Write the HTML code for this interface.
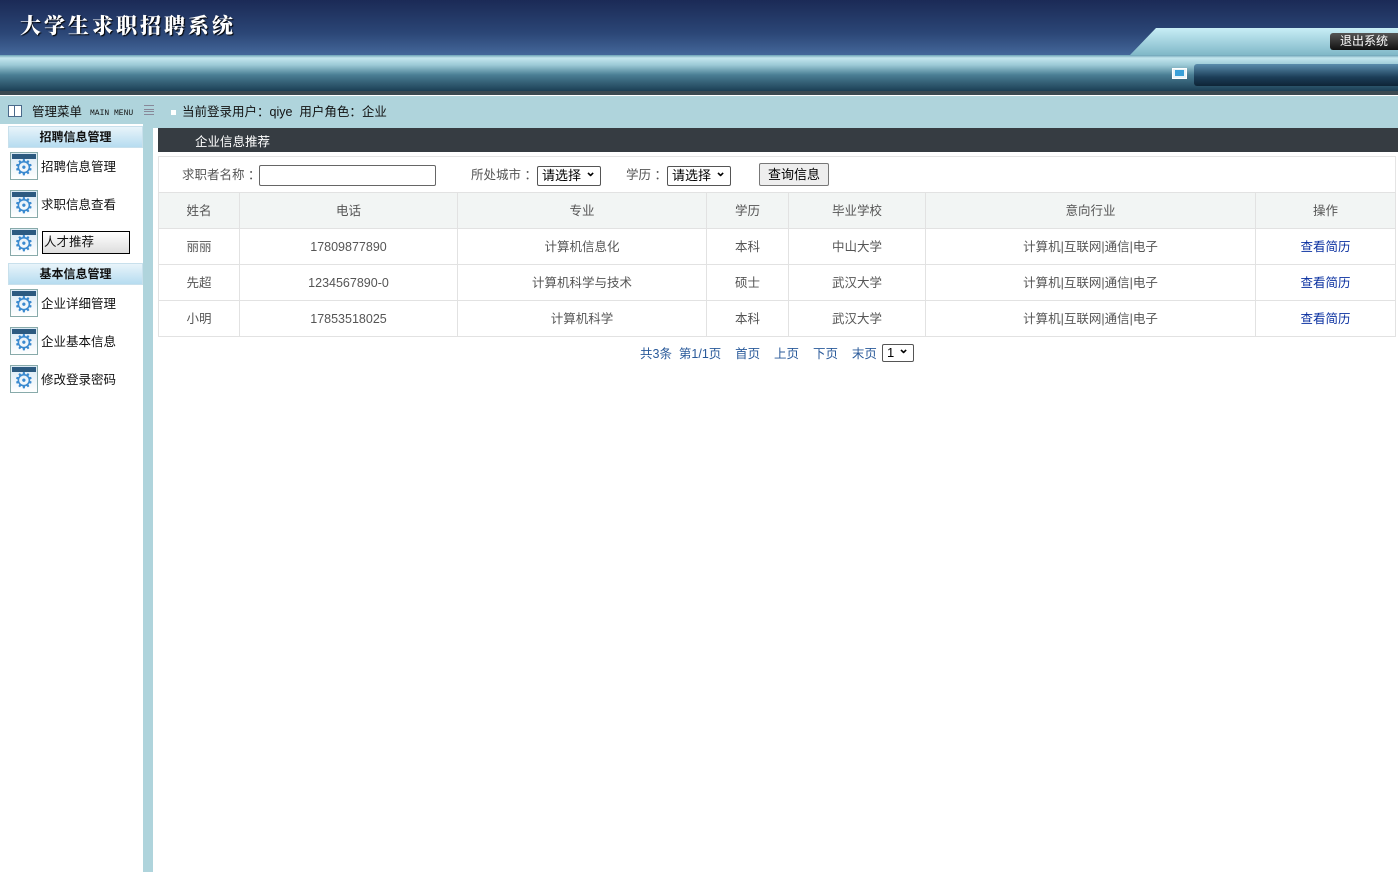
<!DOCTYPE html>
<html><head><meta charset="utf-8"><style>
*{margin:0;padding:0;box-sizing:border-box}
body{width:1398px;height:872px;overflow:hidden;background:#fff;font-family:"Liberation Sans","Noto Sans CJK SC",sans-serif;font-size:12px;color:#333;position:relative}
.abs{position:absolute}
#hdr{left:0;top:0;width:1398px;height:55px;background:linear-gradient(#1b2a56,#2b4676 60%,#44679a)}
#title{left:20px;top:10px;color:#fff;font-family:"Noto Serif CJK SC",serif;font-weight:900;font-size:21px;letter-spacing:3px;text-shadow:1px 1px 1px #000}
#tab{left:1130px;top:28px;width:268px;height:27px;background:linear-gradient(#c8eef6,#80b8c8);clip-path:polygon(26px 0,100% 0,100% 100%,0 100%)}
#exit{left:1330px;top:33px;width:68px;height:17px;background:linear-gradient(#555,#111);border-radius:3px 0 0 3px;color:#fff;font-size:12px;line-height:17px;padding-left:10px}
#band{left:0;top:55px;width:1398px;height:36px;background:linear-gradient(#6aa0b4 0,#c4e6ee 3px,#9ccad6 10px,#4a7e94 20px,#1c3f55 36px)}
#mon{left:1172px;top:68px;width:15px;height:11px;background:#e8f4f8;border:1px solid #fff}
#mon i{position:absolute;left:2px;top:1px;width:9px;height:6px;background:#3aa0d8}
#dbox{left:1194px;top:64px;width:204px;height:22px;background:linear-gradient(#5a8cac,#1c3e58 60%,#0e2436);border-radius:3px 0 0 3px}
#strip{left:0;top:91px;width:1398px;height:5px;background:#3b4a52;border-bottom:1px solid #fff}
#bar{left:0;top:96px;width:1398px;height:32px;background:#afd4dc}
#side{left:0;top:124px;width:143px;height:748px;background:#fff}
#sstripe{left:143px;top:124px;width:10px;height:748px;background:#afd4dc}
.sh{position:absolute;left:8px;width:135px;height:22px;background:linear-gradient(#e8f4fa,#b6dcf0);border:1px solid #c8e0ec;text-align:center;font-weight:bold;font-size:12px;line-height:20px;color:#111}
.mi{position:absolute;left:10px;height:28px;width:130px}
.ic{position:absolute;left:0;top:0;width:28px;height:28px;border:1px solid #8aa;background:linear-gradient(#d8e8f4,#fff);}
.ic:before{content:"";position:absolute;left:1px;top:1px;width:24px;height:5px;background:#2c5a80}
.ic:after{content:"⚙";position:absolute;left:3px;top:3px;font-size:22px;line-height:24px;color:#3a8ad0}
.mt{position:absolute;left:31px;top:7px;font-size:12.5px;color:#111;line-height:16px}
#ctitle{left:158px;top:128px;width:1240px;height:24px;background:#363c42;color:#fff;font-size:12.5px;line-height:28px;padding-left:37px}
#srch{left:158px;top:156px;width:1238px;height:37px;border:1px solid #e4e4e4;border-bottom:none}
table{position:absolute;left:158px;top:192px;border-collapse:collapse;width:1238px}
td{border:1px solid #e2e2e2;height:36px;text-align:center;font-size:12.5px;color:#555;line-height:14px;padding-bottom:0}
tr.h td{background:#f2f5f4}
.lnk{color:#0a30a0}
.sel{position:absolute;height:20px;border:1px solid #555;border-radius:2px;background:#fff;font-size:13px;color:#000;line-height:18px;padding-left:4px}
.sel:after{content:"⌄";position:absolute;right:4px;top:-4px;font-weight:bold}
#pg{left:640px;top:346px;color:#2a5a9a;font-size:12.5px;line-height:16px}
</style></head><body>
<div class="abs" id="hdr"></div>
<div class="abs" id="title">大学生求职招聘系统</div>
<div class="abs" id="tab"></div>
<div class="abs" id="exit">退出系统</div>
<div class="abs" id="band"></div>
<div class="abs" id="mon"><i></i></div>
<div class="abs" id="dbox"></div>
<div class="abs" id="strip"></div>
<div class="abs" id="bar"></div>
<div class="abs" style="left:8px;top:105px;width:14px;height:12px;border:1px solid #4a6a8a;background:#fff"><div style="position:absolute;left:5px;top:0;width:1px;height:10px;background:#4a6a8a"></div></div>
<div class="abs" style="left:32px;top:104px;font-size:12.5px;color:#111;line-height:16px">管理菜单</div>
<div class="abs" style="left:90px;top:109px;font-size:8px;color:#111;font-family:'Liberation Mono',monospace">MAIN MENU</div>
<div class="abs" style="left:144px;top:105px;width:10px;height:10px;border-top:1px solid #889;border-bottom:1px solid #889;"><div style="margin-top:3px;border-top:1px solid #889;height:3px;border-bottom:1px solid #889"></div></div>
<div class="abs" style="left:171px;top:110px;width:5px;height:5px;background:#fff"></div>
<div class="abs" style="left:182px;top:104px;font-size:12.5px;color:#111;line-height:16px">当前登录用户：qiye&nbsp; 用户角色：企业</div>
<div class="abs" id="side"></div>
<div class="abs" id="sstripe"></div>
<div class="sh" style="top:126px">招聘信息管理</div>
<div class="mi" style="top:152px"><div class="ic"></div><div class="mt">招聘信息管理</div></div>
<div class="mi" style="top:190px"><div class="ic"></div><div class="mt">求职信息查看</div></div>
<div class="mi" style="top:228px"><div class="ic"></div><div class="mt" style="left:32px;top:3px;width:88px;height:23px;border:1px solid #000;background:linear-gradient(#fff,#ddd);padding-left:1px;line-height:20px">人才推荐</div></div>
<div class="sh" style="top:263px">基本信息管理</div>
<div class="mi" style="top:289px"><div class="ic"></div><div class="mt">企业详细管理</div></div>
<div class="mi" style="top:327px"><div class="ic"></div><div class="mt">企业基本信息</div></div>
<div class="mi" style="top:365px"><div class="ic"></div><div class="mt">修改登录密码</div></div>
<div class="abs" id="ctitle">企业信息推荐</div>
<div class="abs" id="srch"></div>
<div class="abs" style="left:182px;top:167px;font-size:12.5px;color:#555;line-height:16px">求职者名称 ：</div>
<div class="abs" style="left:259px;top:165px;width:177px;height:21px;border:1px solid #666;border-radius:2px;background:#fff"></div>
<div class="abs" style="left:471px;top:167px;font-size:12.5px;color:#555;line-height:16px">所处城市 ：</div>
<div class="sel" style="left:537px;top:166px;width:64px">请选择</div>
<div class="abs" style="left:626px;top:167px;font-size:12.5px;color:#555;line-height:16px">学历 ：</div>
<div class="sel" style="left:667px;top:166px;width:64px">请选择</div>
<div class="abs" style="left:759px;top:163px;width:70px;height:23px;border:1px solid #777;border-radius:2px;background:#eee;font-size:13px;color:#000;text-align:center;line-height:22px">查询信息</div>
<table>
<colgroup><col style="width:81px"><col style="width:218px"><col style="width:249px"><col style="width:82px"><col style="width:137px"><col style="width:330px"><col></colgroup>
<tr class="h"><td>姓名</td><td>电话</td><td>专业</td><td>学历</td><td>毕业学校</td><td>意向行业</td><td>操作</td></tr>
<tr><td>丽丽</td><td>17809877890</td><td>计算机信息化</td><td>本科</td><td>中山大学</td><td>计算机|互联网|通信|电子</td><td class="lnk">查看简历</td></tr>
<tr><td>先超</td><td>1234567890-0</td><td>计算机科学与技术</td><td>硕士</td><td>武汉大学</td><td>计算机|互联网|通信|电子</td><td class="lnk">查看简历</td></tr>
<tr><td>小明</td><td>17853518025</td><td>计算机科学</td><td>本科</td><td>武汉大学</td><td>计算机|互联网|通信|电子</td><td class="lnk">查看简历</td></tr>
</table>
<div class="abs" id="pg">共3条&nbsp; 第1/1页&nbsp;&nbsp;&nbsp; 首页&nbsp;&nbsp;&nbsp; 上页&nbsp;&nbsp;&nbsp; 下页&nbsp;&nbsp;&nbsp; 末页</div>
<div class="sel" style="left:882px;top:344px;width:32px;height:18px;line-height:16px;border-radius:2px">1</div>
</body></html>
